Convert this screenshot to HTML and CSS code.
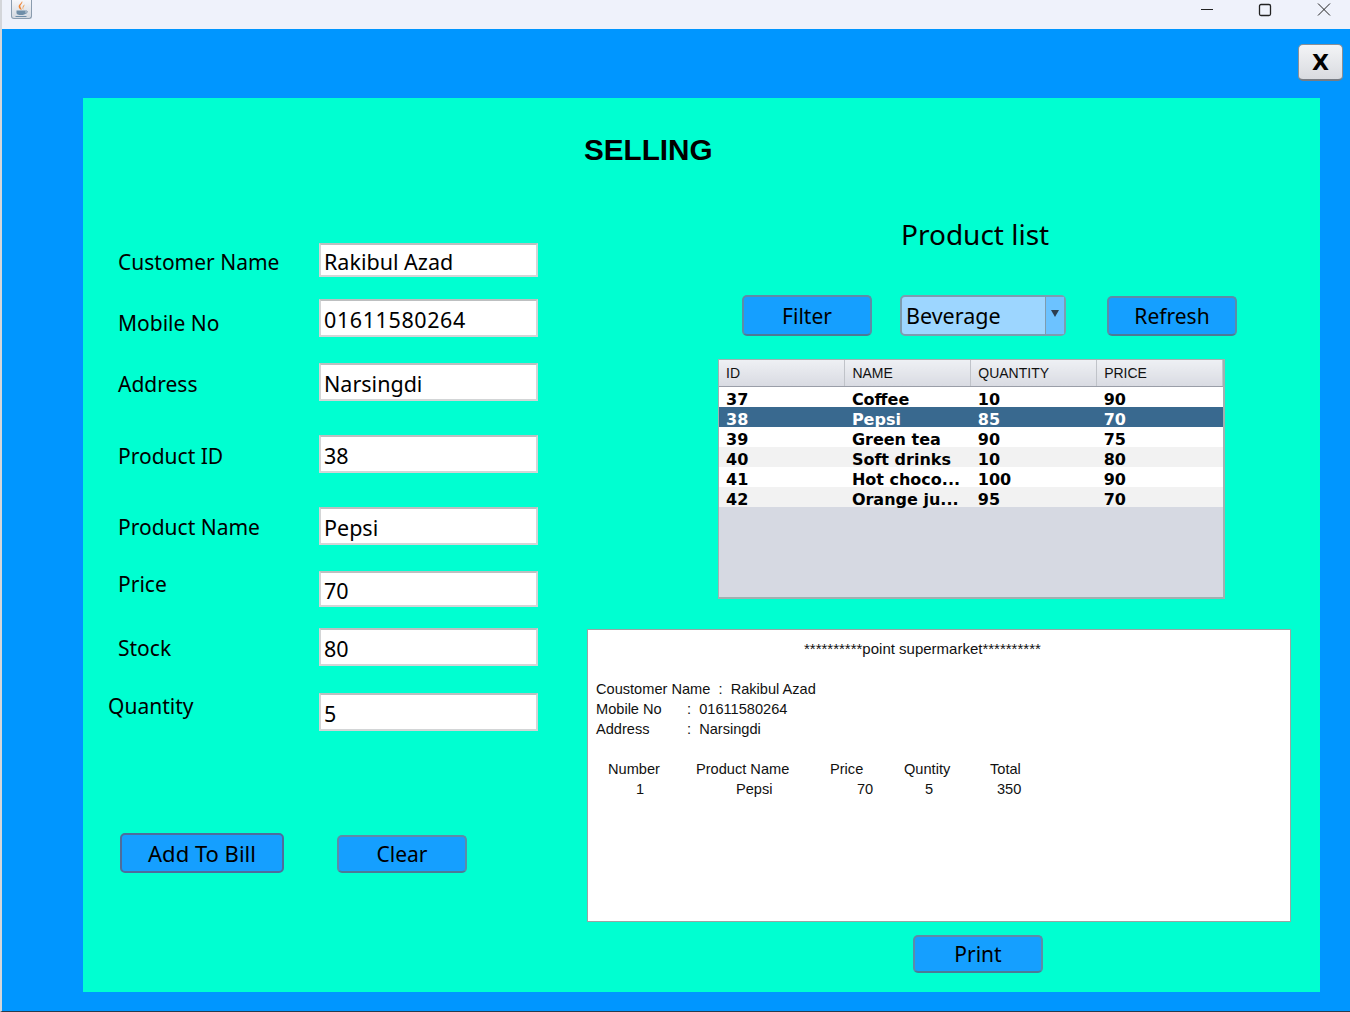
FILE: index.html
```html
<!DOCTYPE html>
<html>
<head>
  <title>Selling</title>
  <link rel="stylesheet" href="styles.css">
</head>
<body>
  <div class="window">
    <div class="titlebar">
      <span class="app-icon">
        <svg width="19" height="18" viewBox="0 0 19 18">
          <path d="M10 1c1.500 2.500-2.500 3.500-1.500 6 .4 1 1.300 1.800 1 3-2.500-1.200-3.800-3.500-2-5.500C8.500 3.300 10 2.500 10 1z" fill="#ee8433"/>
          <path d="M12.500 4.500c.3 2-2 2.800-1 5.300-1.800-1-1-3.800 1-5.300z" fill="#f2a65e"/>
          <path d="M4.500 10.500h9v2.500c0 1.500-2 2-4.500 2s-4.500-.5-4.500-2z" fill="#6f8ea8"/>
          <path d="M13.500 11h1c1.300 0 1.300 2.200-1.500 2.400" fill="none" stroke="#6f8ea8"/>
          <path d="M3.500 16.500h11" stroke="#6f8ea8"/>
        </svg>
      </span>
      <div class="win-controls">
        <svg class="win-btn" width="58" height="20" viewBox="0 0 58 20"><path d="M25 9.500h12" stroke="#222" fill="none"/></svg>
        <svg class="win-btn" width="58" height="20" viewBox="0 0 58 20"><rect x="25.500" y="4.500" width="11" height="11" rx="1.500" stroke="#222" stroke-width="1.300" fill="none"/></svg>
        <svg class="win-btn" width="58" height="20" viewBox="0 0 58 20"><path d="M26 3.500l12 12M38 3.500l-12 12" stroke="#222" fill="none"/></svg>
      </div>
    </div>

    <div class="desk">
      <div class="desk-top">
        <button class="close-btn">X</button>
      </div>

      <div class="panel">
        <h1 class="title">SELLING</h1>

        <div class="panel-body">
          <div class="left-col">
            <div class="form">
              <label class="label label-first">Customer Name</label>
              <input class="field field-short" type="text" value="Rakibul Azad">
              <label class="label label-low">Mobile No</label>
              <input class="field field-digits" type="text" value="01611580264">
              <label class="label label-mid">Address</label>
              <input class="field" type="text" value="Narsingdi">
              <label class="label label-mid">Product ID</label>
              <input class="field" type="text" value="38">
              <label class="label">Product Name</label>
              <input class="field" type="text" value="Pepsi">
              <label class="label label-high">Price</label>
              <input class="field field-mid" type="text" value="70">
              <label class="label">Stock</label>
              <input class="field" type="text" value="80">
              <label class="label label-high label-out">Quantity</label>
              <input class="field" type="text" value="5">
            </div>

            <div class="actions">
              <button class="btn btn-add">Add To Bill</button>
              <button class="btn">Clear</button>
            </div>
          </div>

          <div class="right-col">
            <h2 class="list-title">Product list</h2>

            <div class="toolbar">
              <button class="btn">Filter</button>
              <div class="combo">
                <span class="combo-text">Beverage</span>
                <span class="combo-arrow"></span>
              </div>
              <button class="btn btn-refresh">Refresh</button>
            </div>

            <div class="table-box">
              <table class="products">
                <thead>
                  <tr><th>ID</th><th>NAME</th><th>QUANTITY</th><th>PRICE</th></tr>
                </thead>
                <tbody>
                  <tr><td>37</td><td>Coffee</td><td>10</td><td>90</td></tr>
                  <tr class="selected"><td>38</td><td>Pepsi</td><td>85</td><td>70</td></tr>
                  <tr><td>39</td><td>Green tea</td><td>90</td><td>75</td></tr>
                  <tr class="alt"><td>40</td><td>Soft drinks</td><td>10</td><td>80</td></tr>
                  <tr><td>41</td><td>Hot choco...</td><td>100</td><td>90</td></tr>
                  <tr class="alt"><td>42</td><td>Orange ju...</td><td>95</td><td>70</td></tr>
                </tbody>
              </table>
            </div>

            <div class="bill">
              <div class="bill-head">**********point supermarket**********</div>
              <div class="bill-info">
                <div>Coustomer Name&nbsp; :&nbsp; Rakibul Azad</div>
                <div class="info-row"><span class="info-key">Mobile No</span><span>:&nbsp; 01611580264</span></div>
                <div class="info-row"><span class="info-key">Address</span><span>:&nbsp; Narsingdi</span></div>
              </div>
              <div class="bill-cols">
                <span>Number</span><span>Product Name</span><span>Price</span><span>Quntity</span><span>Total</span>
              </div>
              <div class="bill-vals">
                <span>1</span><span>Pepsi</span><span>70</span><span>5</span><span>350</span>
              </div>
            </div>

            <div class="print-row">
              <button class="btn btn-print">Print</button>
            </div>
          </div>
        </div>
      </div>
    </div>
  </div>
</body>
</html>
```

FILE: styles.css
```css
html, body {
  margin: 0;
  height: 100%;
  overflow: hidden;
}

.window {
  width: 1350px;
  height: 1012px;
  box-sizing: border-box;
  display: flex;
  flex-direction: column;
  border-left: 2px solid #d4d6da;
  border-bottom: 1px solid #2b3b4b;
  background-color: #0096ff;
}

.titlebar {
  height: 29px;
  display: flex;
  justify-content: space-between;
  background-color: #eff2fb;
  flex-shrink: 0;
}

.app-icon {
  width: 19px;
  height: 18px;
  margin-left: 9px;
  border: 1px solid #8a9cae;
  border-top: 0;
  border-radius: 0 0 3px 3px;
  background: linear-gradient(#f6f7fa, #d3d8e0);
}

.win-controls {
  display: flex;
  align-items: flex-start;
}

.win-btn {
  display: block;
}

.desk {
  flex: 1;
  padding-left: 81px;
  padding-right: 30px;
}

.desk-top {
  height: 69px;
  box-sizing: border-box;
  padding-top: 15px;
  margin-right: -23px;
  display: flex;
  justify-content: flex-end;
}

.close-btn {
  width: 45px;
  height: 37px;
  padding: 0;
  border: 1px solid #8a8f96;
  border-bottom: 2px solid #777c84;
  border-radius: 5px;
  background: linear-gradient(#f3f4f6, #d9dbe0);
  font-family: "DejaVu Sans", sans-serif;
  font-size: 22px;
  font-weight: bold;
  color: #000;
}

.panel {
  height: 894px;
  background-color: #00ffd1;
  display: flex;
  flex-direction: column;
}

.title {
  margin: 35px 0 0 501px;
  font-family: "Liberation Sans", sans-serif;
  font-size: 29.7px;
  line-height: 34px;
  font-weight: bold;
  color: #000;
}

.panel-body {
  margin-top: 48px;
  display: grid;
  grid-template-columns: 504px 704px;
}

.left-col {
  padding-top: 28px;
}

.form {
  display: grid;
  grid-template-columns: 201px 219px;
  grid-template-rows: 56px 64px 72px 72px 64px 57px 65px 37px;
  padding-left: 35px;
  align-items: start;
}

.label {
  margin-top: 2px;
  font-family: "Noto Sans", sans-serif;
  font-size: 21px;
  line-height: 37px;
  color: #000;
}

.label-first {
  margin-top: 1px;
}

.label-low {
  margin-top: 6px;
}

.label-mid {
  margin-top: 3px;
}

.label-high {
  margin-top: -5px;
}

.label-out {
  margin-left: -10px;
}

.field {
  width: 219px;
  height: 38px;
  box-sizing: border-box;
  padding: 3px 3px 0;
  border: 2px solid #d3d5d6;
  border-top-color: #bdbfc0;
  background-color: #fff;
  outline: none;
  font-family: "Noto Sans", sans-serif;
  font-size: 21.5px;
  color: #000;
}

.field-short {
  height: 34px;
}

.field-mid {
  height: 36px;
}

.field-digits {
  letter-spacing: .6px;
}

.actions {
  margin-top: 103px;
  padding-left: 37px;
  display: flex;
  align-items: flex-end;
  gap: 53px;
}

.btn {
  width: 130px;
  height: 38px;
  padding: 0;
  border: 2px solid #5d8ba8;
  border-bottom-color: #4d7a96;
  border-radius: 5px;
  background-color: #159fff;
  font-family: "Noto Sans", sans-serif;
  font-size: 21px;
  color: #000;
}

.btn-add {
  width: 164px;
  height: 40px;
  border-color: #4f6c9c;
  font-size: 22px;
}

.right-col {
  display: flex;
  flex-direction: column;
}

.list-title {
  margin: 0;
  padding-left: 314px;
  font-family: "Noto Sans", sans-serif;
  font-size: 28px;
  line-height: 38px;
  font-weight: normal;
  color: #000;
}

.toolbar {
  margin-top: 42px;
  padding-left: 155px;
  display: flex;
  align-items: flex-start;
  gap: 28px;
}

.toolbar .btn {
  height: 41px;
}

.toolbar .btn-refresh {
  margin-top: 1px;
  margin-left: 13px;
  height: 40px;
}

.combo {
  width: 166px;
  height: 41px;
  box-sizing: border-box;
  display: flex;
  border: 2px solid #7d9cb0;
  border-radius: 5px;
  background-color: #9dd6ff;
}

.combo-text {
  flex: 1;
  padding-left: 4px;
  font-family: "Noto Sans", sans-serif;
  font-size: 21.5px;
  line-height: 37px;
  color: #000;
}

.combo-arrow {
  width: 19px;
  display: flex;
  justify-content: center;
  padding-top: 13px;
  box-sizing: border-box;
  border-left: 1px solid #7d9cb0;
  background-color: #6cc2ff;
}

.combo-arrow::before {
  content: '';
  width: 0;
  height: 0;
  border-left: 4px solid transparent;
  border-right: 4px solid transparent;
  border-top: 7px solid #2c3e50;
}

.table-box {
  margin-top: 23px;
  margin-left: 131px;
  width: 507px;
  height: 240px;
  box-sizing: border-box;
  border: 1px solid #a0b0b0;
  border-width: 1px 2px 2px 1px;
  background-color: #d6d9e2;
}

.products {
  width: 504px;
  border-collapse: collapse;
  table-layout: fixed;
}

.products th {
  height: 26px;
  padding: 0 0 0 7px;
  box-sizing: border-box;
  text-align: left;
  font-family: "Liberation Sans", sans-serif;
  font-size: 14px;
  font-weight: normal;
  color: #111;
  border-right: 1px solid #c0c3c9;
  border-bottom: 1px solid #9a9ea8;
  background: linear-gradient(#eef0f4, #d9dbe2);
}

.products td {
  height: 20px;
  padding: 5px 0 0 7px;
  box-sizing: border-box;
  font-family: "DejaVu Sans", sans-serif;
  font-size: 16px;
  line-height: 15px;
  font-weight: bold;
  color: #000;
  white-space: nowrap;
  background-color: #fff;
}

.products .alt td {
  background-color: #f2f2f2;
}

.products .selected td {
  background-color: #39698f;
  color: #fff;
}

.bill {
  margin-top: 30px;
  height: 293px;
  box-sizing: border-box;
  border: 1px solid #9aa3a3;
  background-color: #fff;
  padding: 9px 0 0 8px;
  font-family: "Liberation Sans", sans-serif;
  font-size: 14.6px;
  line-height: 20px;
  color: #111;
}

.bill-head {
  padding-left: 208px;
  font-size: 15px;
}

.bill-info {
  margin-top: 20px;
}

.info-row {
  display: flex;
}

.info-key {
  width: 91px;
}

.bill-cols {
  margin-top: 20px;
  padding-left: 12px;
  display: grid;
  grid-template-columns: 88px 134px 74px 86px 60px;
}

.bill-vals {
  padding-left: 40px;
  display: grid;
  grid-template-columns: 100px 121px 68px 72px 60px;
}

.print-row {
  margin-top: 13px;
  padding-left: 326px;
}
```
